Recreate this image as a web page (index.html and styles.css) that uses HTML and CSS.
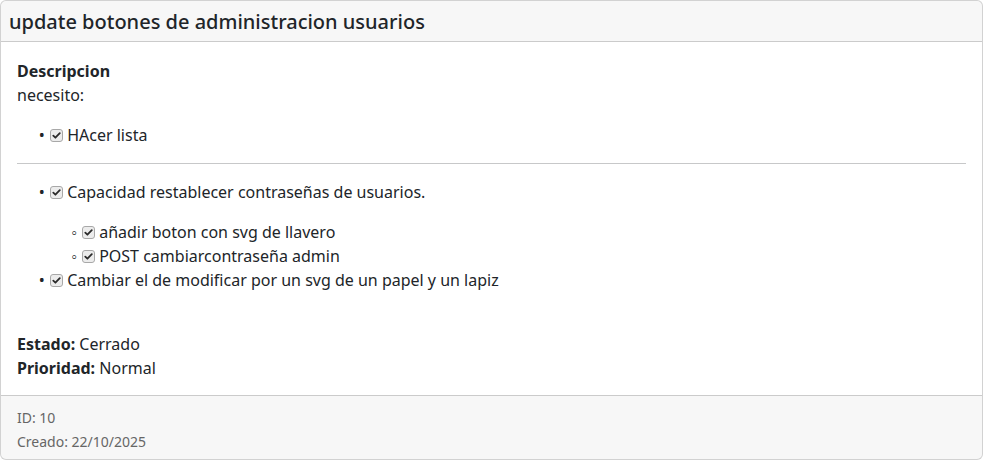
FILE: index.html
```html
<!DOCTYPE html>
<html lang="es">
<head>
<meta charset="utf-8">
<title>update botones de administracion usuarios</title>
<link rel="stylesheet" href="styles.css">
</head>
<body>
<div class="card">
  <div class="card-header">
    <h5 class="card-title">update botones de administracion usuarios</h5>
  </div>
  <div class="card-body">
    <div class="desc">
      <strong class="label-block">Descripcion</strong>
      <div class="desc-text">
        <p class="intro">necesito:</p>
        <ul class="tasks">
          <li><span class="check"><svg viewBox="0 0 13 13" width="13" height="13"><rect x="0.5" y="0.5" width="12" height="12" rx="2.5" fill="#ececec" stroke="#a8a8a8"/><path d="M3.3 6.7 L5.4 8.7 L9.8 4.2" fill="none" stroke="#2b2b2b" stroke-width="1.8" stroke-linecap="round" stroke-linejoin="round"/></svg></span> HAcer lista</li>
        </ul>
        <hr class="sep">
        <ul class="tasks">
          <li>
            <p class="task-p"><span class="check"><svg viewBox="0 0 13 13" width="13" height="13"><rect x="0.5" y="0.5" width="12" height="12" rx="2.5" fill="#ececec" stroke="#a8a8a8"/><path d="M3.3 6.7 L5.4 8.7 L9.8 4.2" fill="none" stroke="#2b2b2b" stroke-width="1.8" stroke-linecap="round" stroke-linejoin="round"/></svg></span> Capacidad restablecer contraseñas de usuarios.</p>
            <ul class="tasks nested">
              <li><span class="check"><svg viewBox="0 0 13 13" width="13" height="13"><rect x="0.5" y="0.5" width="12" height="12" rx="2.5" fill="#ececec" stroke="#a8a8a8"/><path d="M3.3 6.7 L5.4 8.7 L9.8 4.2" fill="none" stroke="#2b2b2b" stroke-width="1.8" stroke-linecap="round" stroke-linejoin="round"/></svg></span> añadir boton con svg de llavero</li>
              <li><span class="check"><svg viewBox="0 0 13 13" width="13" height="13"><rect x="0.5" y="0.5" width="12" height="12" rx="2.5" fill="#ececec" stroke="#a8a8a8"/><path d="M3.3 6.7 L5.4 8.7 L9.8 4.2" fill="none" stroke="#2b2b2b" stroke-width="1.8" stroke-linecap="round" stroke-linejoin="round"/></svg></span> POST cambiarcontraseña admin</li>
            </ul>
          </li>
          <li><span class="check"><svg viewBox="0 0 13 13" width="13" height="13"><rect x="0.5" y="0.5" width="12" height="12" rx="2.5" fill="#ececec" stroke="#a8a8a8"/><path d="M3.3 6.7 L5.4 8.7 L9.8 4.2" fill="none" stroke="#2b2b2b" stroke-width="1.8" stroke-linecap="round" stroke-linejoin="round"/></svg></span> Cambiar el de modificar por un svg de un papel y un lapiz</li>
        </ul>
      </div>
    </div>
    <p class="meta"><strong>Estado:</strong> Cerrado</p>
    <p class="meta"><strong>Prioridad:</strong> Normal</p>
  </div>
  <div class="card-footer">
    <small class="foot-line">ID: 10</small>
    <small class="foot-line">Creado: 22/10/2025</small>
  </div>
</div>
</body>
</html>
```
FILE: styles.css
```css
html, body {
  margin: 0;
  padding: 0;
}
body {
  font-family: "Noto Sans", "Open Sans", sans-serif;
  font-size: 16px;
  line-height: 24px;
  color: #212529;
  background: #ffffff;
}
.card {
  margin-right: 1px;
  border: 1px solid rgba(0, 0, 0, 0.175);
  border-radius: 6px;
  background: #ffffff;
  overflow: hidden;
}
.card-header {
  padding: 9px 8px 7px;
  background: rgba(0, 0, 0, 0.03);
  border-bottom: 1px solid rgba(0, 0, 0, 0.175);
}
.card-title {
  margin: 0;
  font-size: 20px;
  line-height: 24px;
  font-weight: 500;
}
.card-body {
  padding: 17px 16px 15px;
}
.desc {
  margin-bottom: 40px;
}
.label-block {
  display: block;
  font-weight: 700;
}
.intro {
  margin: 0 0 16px;
}
.tasks {
  margin: 0 0 16px;
  padding-left: 32px;
  list-style-type: none;
}
.tasks > li::marker {
  content: "\2022  ";
  font-size: 16px;
}
.tasks.nested {
  margin: 0;
}
.tasks.nested > li::marker {
  content: "\25E6  ";
  font-size: 16px;
}
.check {
  display: inline-block;
  width: 13px;
  height: 13px;
  margin-left: 1px;
  vertical-align: -1px;
}
.check svg {
  display: block;
}
.task-p {
  margin: 0 0 16px;
}
.sep {
  margin: 15px 0 16px;
  border: 0;
  border-top: 1px solid #212529;
  opacity: 0.25;
}
.meta {
  margin: 0;
}
.meta strong {
  font-weight: 700;
}
.card-footer {
  padding: 10px 16px 5px;
  background: rgba(0, 0, 0, 0.03);
  border-top: 1px solid rgba(0, 0, 0, 0.175);
  color: #666666;
}
.foot-line {
  display: block;
  font-size: 14px;
  line-height: 24px;
}
```
